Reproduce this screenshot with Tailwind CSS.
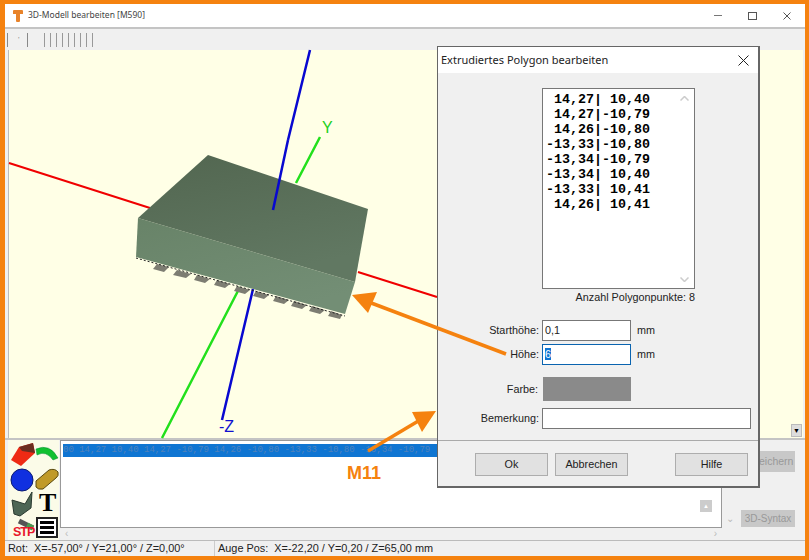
<!DOCTYPE html>
<html lang="de">
  <head>
    <meta charset="UTF-8" />
    <title>3D-Modell bearbeiten [M590]</title>
    <script src="https://cdn.jsdelivr.net/npm/@tailwindcss/browser@4"></script>
  </head>
  <body class="w-[809px] h-[560px] overflow-hidden bg-[#f5820f] font-['Liberation_Sans',sans-serif] text-black">
    <div class="relative w-[809px] h-[560px] pt-[4px] pl-[5px] pr-[4px] pb-[4px]">
      <!-- main window -->
      <div class="flex flex-col h-full bg-[#f0f0f0]">
        <!-- title bar -->
        <div class="flex items-center h-[23px] bg-white shrink-0">
          <svg class="ml-[8px] w-[10px] h-[12px]" viewBox="0 0 10 12">
            <path d="M1 0h8q1 0 1 1v3H7v7q0 1-1 1H4q-1 0-1-1V4H0V1q0-1 1-1z" fill="#e8832a" />
          </svg>
          <span class="ml-[5px] text-[8.500px] text-[#444] font-['Noto_Sans',sans-serif]">3D-Modell bearbeiten [M590]</span>
          <div class="ml-auto flex items-center gap-[26px] pr-[14px]">
            <div class="w-[8px] h-px bg-[#777]"></div>
            <div class="w-[9px] h-[8px] border border-[#555]"></div>
            <svg class="w-[8px] h-[8px]" viewBox="0 0 8 8"><path d="M0.500 0.500l7 7M7.500 0.500l-7 7" stroke="#555" stroke-width="1" /></svg>
          </div>
        </div>
        <!-- toolbar -->
        <div class="flex items-center h-[23px] shrink-0 border-t-2 border-[#c4c4c4] bg-[#f0f0f0] pl-[2px]">
          <div class="w-px h-[14px] bg-[#888]"></div>
          <span class="ml-[10px] w-[4px] text-[8px] leading-none text-[#888]">'</span>
          <div class="ml-[5px] w-px h-[14px] bg-[#888]"></div>
          <div class="ml-[16px] flex gap-[5px]">
            <div class="w-px h-[14px] bg-[#999]"></div>
            <div class="w-px h-[14px] bg-[#999]"></div>
            <div class="w-px h-[14px] bg-[#999]"></div>
            <div class="w-px h-[14px] bg-[#999]"></div>
            <div class="w-px h-[14px] bg-[#999]"></div>
            <div class="w-px h-[14px] bg-[#999]"></div>
            <div class="w-px h-[14px] bg-[#999]"></div>
            <div class="w-px h-[14px] bg-[#999]"></div>
            <div class="w-px h-[14px] bg-[#999]"></div>
          </div>
        </div>
        <!-- 3D canvas -->
        <div class="relative h-[388px] shrink-0 ml-[3px] mr-[2px] bg-[#ffffe6] border-l border-[#bbb]">
          <svg class="absolute left-[-9px] top-[-50px] w-[809px] h-[560px]" viewBox="0 0 809 560">
            <defs>
              <linearGradient id="topFace" x1="0" y1="0" x2="0.4" y2="1">
                <stop offset="0" stop-color="#526650" />
                <stop offset="1" stop-color="#617862" />
              </linearGradient>
              <linearGradient id="sideFace" x1="0" y1="0" x2="0.6" y2="1">
                <stop offset="0" stop-color="#688368" />
                <stop offset="1" stop-color="#738e75" />
              </linearGradient>
            </defs>
            <path d="M9 163L150 208M358 272L437 297" stroke="#f00000" stroke-width="2" />
            <path d="M320 137L296 183M240 287L162 438" stroke="#22e01c" stroke-width="2.500" />
            <path d="M310 50L288 140M253 289L222 420" stroke="#0808d0" stroke-width="2.500" />
            <g fill="#7d7d72">
              <path d="M157 264L169 267L164 272L153 269z" />
              <path d="M177 270L191 274L186 278L173 275z" />
              <path d="M197 275L210 279L205 283L194 280z" />
              <path d="M217 280L230 284L225 288L214 285z" />
              <path d="M237 286L250 290L245 294L234 291z" />
              <path d="M256 291L269 295L264 299L253 296z" />
              <path d="M276 296L289 300L284 304L273 301z" />
              <path d="M294 301L307 305L302 309L291 306z" />
              <path d="M312 306L325 310L320 314L309 311z" />
              <path d="M331 311L342 315L340 319L328 316z" />
            </g>
            <path d="M136 258L345 316" stroke="#222" stroke-width="1" stroke-dasharray="2 2" />
            <path d="M138 218L355 282L345 314L136 257z" fill="url(#sideFace)" />
            <path d="M208 155L368 209L355 282L138 218z" fill="url(#topFace)" />
            <path d="M288 140L273 210" stroke="#0808d0" stroke-width="2.500" />
          </svg>
          <span class="absolute left-[313px] top-[70px] text-[16px] leading-none text-[#22d01c]">Y</span>
          <span class="absolute left-[210px] top-[369px] text-[16px] leading-none text-[#1010d0]">-Z</span>
          <div class="absolute right-[1px] bottom-[1px] flex items-center justify-center w-[11px] h-[13px] bg-[#ddd] border border-[#bbb] text-[7px] leading-none">▼</div>
        </div>
        <!-- lower panel -->
        <div class="flex h-[102px] shrink-0 border-t-2 border-[#c4c4c4]">
          <svg class="w-[51px] h-[100px] ml-[3px] shrink-0" viewBox="0 0 51 100">
            <rect x="0" y="0" width="51" height="100" fill="#fbfbe8" />
            <path d="M3 20L11 7L25 3L27 13L13 26z" fill="#ee2a14" />
            <path d="M11 7L25 3L27 13L14 11z" fill="#6a2d20" />
            <path d="M28 9Q42 3 50 18L45 20Q38 10 29 15z" fill="#10c030" stroke="#083" stroke-width="0.500" />
            <circle cx="14" cy="40" r="11" fill="#1030e0" stroke="#0a1a70" />
            <path d="M28 41L41 30Q47 28 50 32Q51 36 48 38L35 49Q30 50 28 47z" fill="#c09a28" stroke="#5a4a10" />
            <path d="M4 60L17 64L24 52L23 68L12 76L6 74z" fill="#4d6655" stroke="#2a3a30" />
            <path d="M11 81L25 88" stroke="#555" stroke-width="5" />
            <path d="M19 85L25 88" stroke="#4a9a50" stroke-width="5" />
          </svg>
          <div class="relative flex flex-col w-[662px] ml-[1px] shrink-0">
            <div class="flex-1 bg-white border border-[#999] pt-[3px] px-[2px] overflow-hidden">
              <div class="h-[13px] bg-[#0f75d2] text-[#4f82bb] text-[9px] leading-[13px] whitespace-nowrap font-['Liberation_Mono',monospace]">00 14,27 10,40 14,27 -10,79 14,26 -10,80 -13,33 -10,80 -13,34 -10,79 -13,34 10,40 -13,33 10,41 14,26 10,41</div>
            </div>
            <div class="h-[12px] flex items-center justify-between px-[5px] text-[10px] leading-none text-[#bbb]">
              <span>‹</span><span>›</span>
            </div>
            <div class="absolute right-[10px] top-[60px] w-[12px] h-[12px] bg-[#ccc] flex items-center justify-center text-[6px] leading-none text-white">▲</div>
          </div>
          <div class="relative flex-1">
            <span class="absolute left-[4px] top-[74px] text-[10px] leading-none text-[#bbb]">⌄</span>
            <div class="absolute left-[37px] top-[11px] w-[36px] h-[21px] bg-[#c8c8c8] text-[#999] text-[10.500px] leading-[21px] text-right pr-[2px] overflow-hidden">eichern</div>
            <div class="absolute left-[19px] top-[70px] w-[54px] h-[17px] bg-[#c8c8c8] text-[#999] text-[10px] leading-[17px] text-center">3D-Syntax</div>
          </div>
        </div>
        <!-- status bar -->
        <div class="flex items-center flex-1 border-t border-[#bbb] pl-[3px] text-[10.900px] leading-none text-[#222]">
          <span class="w-[206px] whitespace-pre">Rot:  X=-57,00° / Y=21,00° / Z=0,00°</span>
          <span class="border-l border-[#ccc] h-full flex items-center pl-[3px] whitespace-pre">Auge Pos:  X=-22,20 / Y=0,20 / Z=65,00 mm</span>
        </div>
      </div>

      <!-- T, menu and STP over the tool icons -->
      <span class="absolute left-[39px] top-[490px] text-[26px] leading-none font-bold font-['Liberation_Serif',serif]">T</span>
      <div class="absolute left-[36px] top-[517px] w-[22px] h-[21px] bg-white border-2 border-[#222] flex flex-col justify-center gap-[2px] px-[2px]">
        <div class="h-[3px] bg-black"></div>
        <div class="h-[3px] bg-black"></div>
        <div class="h-[3px] bg-black"></div>
      </div>
      <span class="absolute left-[13px] top-[526px] text-[12.500px] leading-none font-bold text-[#e8182c] tracking-[-1px]">STP</span>

      <!-- dialog -->
      <div class="absolute left-[437px] top-[46px] w-[323px] h-[442px] flex flex-col bg-[#f0f0f0] border border-[#666] border-r-2 border-b-2">
        <div class="flex items-center justify-between h-[26px] shrink-0 bg-white pl-[3px] pr-[9px] text-[11px] font-['Noto_Sans',sans-serif] text-[#222]">
          <span>Extrudiertes Polygon bearbeiten</span>
          <svg class="w-[11px] h-[11px]" viewBox="0 0 11 11"><path d="M0.500 0.500l10 10M10.500 0.500l-10 10" stroke="#222" stroke-width="1" /></svg>
        </div>
        <div class="flex-1 flex flex-col">
          <div class="relative ml-[104px] mt-[15px] w-[153px] h-[201px] bg-white border border-[#777] pt-[3px]">
            <pre class="pl-[3px] font-['Liberation_Mono',monospace] font-bold text-[13.330px] leading-[15px] text-black">
 14,27| 10,40
 14,27|-10,79
 14,26|-10,80
-13,33|-10,80
-13,34|-10,79
-13,34| 10,40
-13,33| 10,41
 14,26| 10,41</pre>
            <svg class="absolute right-[5px] top-[7px] w-[9px] h-[5px]" viewBox="0 0 9 5"><path d="M0.500 4.500L4.500 0.500L8.500 4.500" fill="none" stroke="#ccc" stroke-width="1.500" /></svg>
            <svg class="absolute right-[5px] bottom-[6px] w-[9px] h-[5px]" viewBox="0 0 9 5"><path d="M0.500 0.500L4.500 4.500L8.500 0.500" fill="none" stroke="#ccc" stroke-width="1.500" /></svg>
          </div>
          <div class="ml-[104px] w-[153px] mt-[1px] text-right text-[10.800px] leading-[14px] text-[#222]">Anzahl Polygonpunkte: 8</div>
          <div class="mt-[16px] flex flex-col text-[10.800px] text-[#222]">
            <div class="flex items-center h-[21px]">
              <label class="w-[101px] text-right">Starthöhe:</label>
              <div class="ml-[3px] w-[89px] h-[21px] bg-white border border-[#777] px-[2px] leading-[19px]">0,1</div>
              <span class="ml-[6px]">mm</span>
            </div>
            <div class="flex items-center h-[21px] mt-[3px]">
              <label class="w-[101px] text-right">Höhe:</label>
              <div class="ml-[3px] w-[89px] h-[21px] bg-white border border-[#0a64b0] px-[2px] leading-[19px]"><span class="bg-[#0f75d2] text-white">6</span></div>
              <span class="ml-[6px]">mm</span>
            </div>
            <div class="flex items-center h-[24px] mt-[12px]">
              <label class="w-[100px] text-right">Farbe:</label>
              <div class="ml-[5px] w-[88px] h-[24px] bg-[#8a8a8a]"></div>
            </div>
            <div class="flex items-center h-[21px] mt-[7px]">
              <label class="w-[101px] text-right">Bemerkung:</label>
              <div class="ml-[3px] w-[209px] h-[21px] bg-white border border-[#777]"></div>
            </div>
          </div>
          <div class="mt-[11px] h-[47px] border-t border-[#aaa] flex items-center pl-[37px] text-[10.800px] text-[#222]">
            <button class="w-[73px] h-[23px] bg-[#e1e1e1] border border-[#adadad]">Ok</button>
            <button class="ml-[7px] w-[73px] h-[23px] bg-[#e1e1e1] border border-[#adadad]">Abbrechen</button>
            <button class="ml-[47px] w-[73px] h-[23px] bg-[#e1e1e1] border border-[#adadad]">Hilfe</button>
          </div>
        </div>
      </div>

      <!-- annotation arrows -->
      <svg class="absolute left-0 top-0 w-[809px] h-[560px] pointer-events-none" viewBox="0 0 809 560">
        <path d="M366 301L506 354" stroke="#f5820f" stroke-width="3.500" />
        <path d="M352 295L377 292L368 313z" fill="#f5820f" />
        <path d="M368 451L420 420" stroke="#f5820f" stroke-width="3.500" />
        <path d="M412 412L436 411L422 432z" fill="#f5820f" />
      </svg>
      <span class="absolute left-[347px] top-[463px] text-[18px] leading-[20px] font-bold text-[#f5820f]">M11</span>
    </div>
  </body>
</html>
